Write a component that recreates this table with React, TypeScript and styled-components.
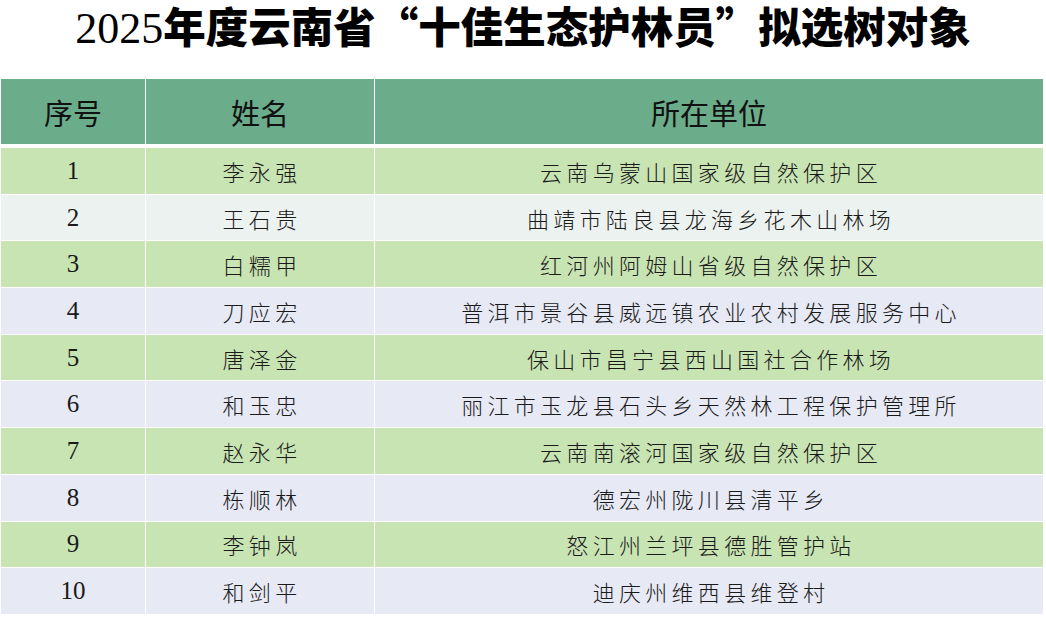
import React from 'react';
import styled, { createGlobalStyle } from 'styled-components';

const GlobalStyle = createGlobalStyle`
  html, body {
    margin: 0;
    padding: 0;
    background: #ffffff;
  }
  body {
    font-family: "Liberation Serif", "Noto Sans CJK SC", serif;
    color: #111111;
  }
`;

const Page = styled.div`
  width: 1046px;
  height: 617px;
  display: flex;
  flex-direction: column;
  overflow: hidden;
`;

const Title = styled.h1`
  margin: -6px 0 0 0;
  height: 85px;
  padding: 0 0 23px 0;
  box-sizing: border-box;
  text-align: center;
  white-space: nowrap;
  font-size: 42.5px;
  line-height: 62px;
  color: #000000;
`;

const Year = styled.span`
  font-family: "Liberation Serif", serif;
  font-weight: 400;
  font-size: 44px;
`;

const TitleText = styled.span`
  font-family: "Noto Sans CJK SC", sans-serif;
  font-weight: 900;
`;

const Table = styled.div`
  margin-left: 1px;
  width: 1042px;
  display: grid;
  grid-template-columns: 144px 228px 1fr;
  column-gap: 1px;
  row-gap: 1px;
`;

const HeaderCell = styled.div`
  height: 65px;
  margin-bottom: 3px;
  background: #6bac8b;
  display: flex;
  align-items: center;
  justify-content: center;
  font-family: "Noto Sans CJK SC", sans-serif;
  font-size: 29px;
  font-weight: 400;
  color: #111111;
`;

const Cell = styled.div<{ $tone: 'green' | 'mist' | 'lavender' }>`
  height: 45.7px;
  display: flex;
  align-items: center;
  justify-content: center;
  background: ${(p) =>
    p.$tone === 'green' ? '#c9e4b3' : p.$tone === 'mist' ? '#ecf2f0' : '#e7e9f5'};
  font-size: 22px;
  font-weight: 300;
  color: #1a1a1a;
`;

const NumCell = styled(Cell)`
  font-family: "Liberation Serif", serif;
  font-size: 25px;
  font-weight: 400;
`;

const TextCell = styled(Cell)`
  font-family: "Noto Sans CJK SC", sans-serif;
  letter-spacing: 4.3px;
  padding-left: 4px;
`;

const rows: [string, string][] = [
  ['李永强', '云南乌蒙山国家级自然保护区'],
  ['王石贵', '曲靖市陆良县龙海乡花木山林场'],
  ['白糯甲', '红河州阿姆山省级自然保护区'],
  ['刀应宏', '普洱市景谷县威远镇农业农村发展服务中心'],
  ['唐泽金', '保山市昌宁县西山国社合作林场'],
  ['和玉忠', '丽江市玉龙县石头乡天然林工程保护管理所'],
  ['赵永华', '云南南滚河国家级自然保护区'],
  ['栋顺林', '德宏州陇川县清平乡'],
  ['李钟岚', '怒江州兰坪县德胜管护站'],
  ['和剑平', '迪庆州维西县维登村'],
];

const toneFor = (i: number): 'green' | 'mist' | 'lavender' => {
  if (i % 2 === 0) return 'green';
  if (i === 1) return 'mist';
  return 'lavender';
};

export default function App() {
  return (
    <Page>
      <GlobalStyle />
      <Title>
        <Year>2025</Year>
        <TitleText>年度云南省“十佳生态护林员”拟选树对象</TitleText>
      </Title>
      <Table>
        <HeaderCell>序号</HeaderCell>
        <HeaderCell>姓名</HeaderCell>
        <HeaderCell>所在单位</HeaderCell>
        {rows.map(([name, unit], i) => (
          <React.Fragment key={i}>
            <NumCell $tone={toneFor(i)}>{i + 1}</NumCell>
            <TextCell $tone={toneFor(i)}>{name}</TextCell>
            <TextCell $tone={toneFor(i)}>{unit}</TextCell>
          </React.Fragment>
        ))}
      </Table>
    </Page>
  );
}
